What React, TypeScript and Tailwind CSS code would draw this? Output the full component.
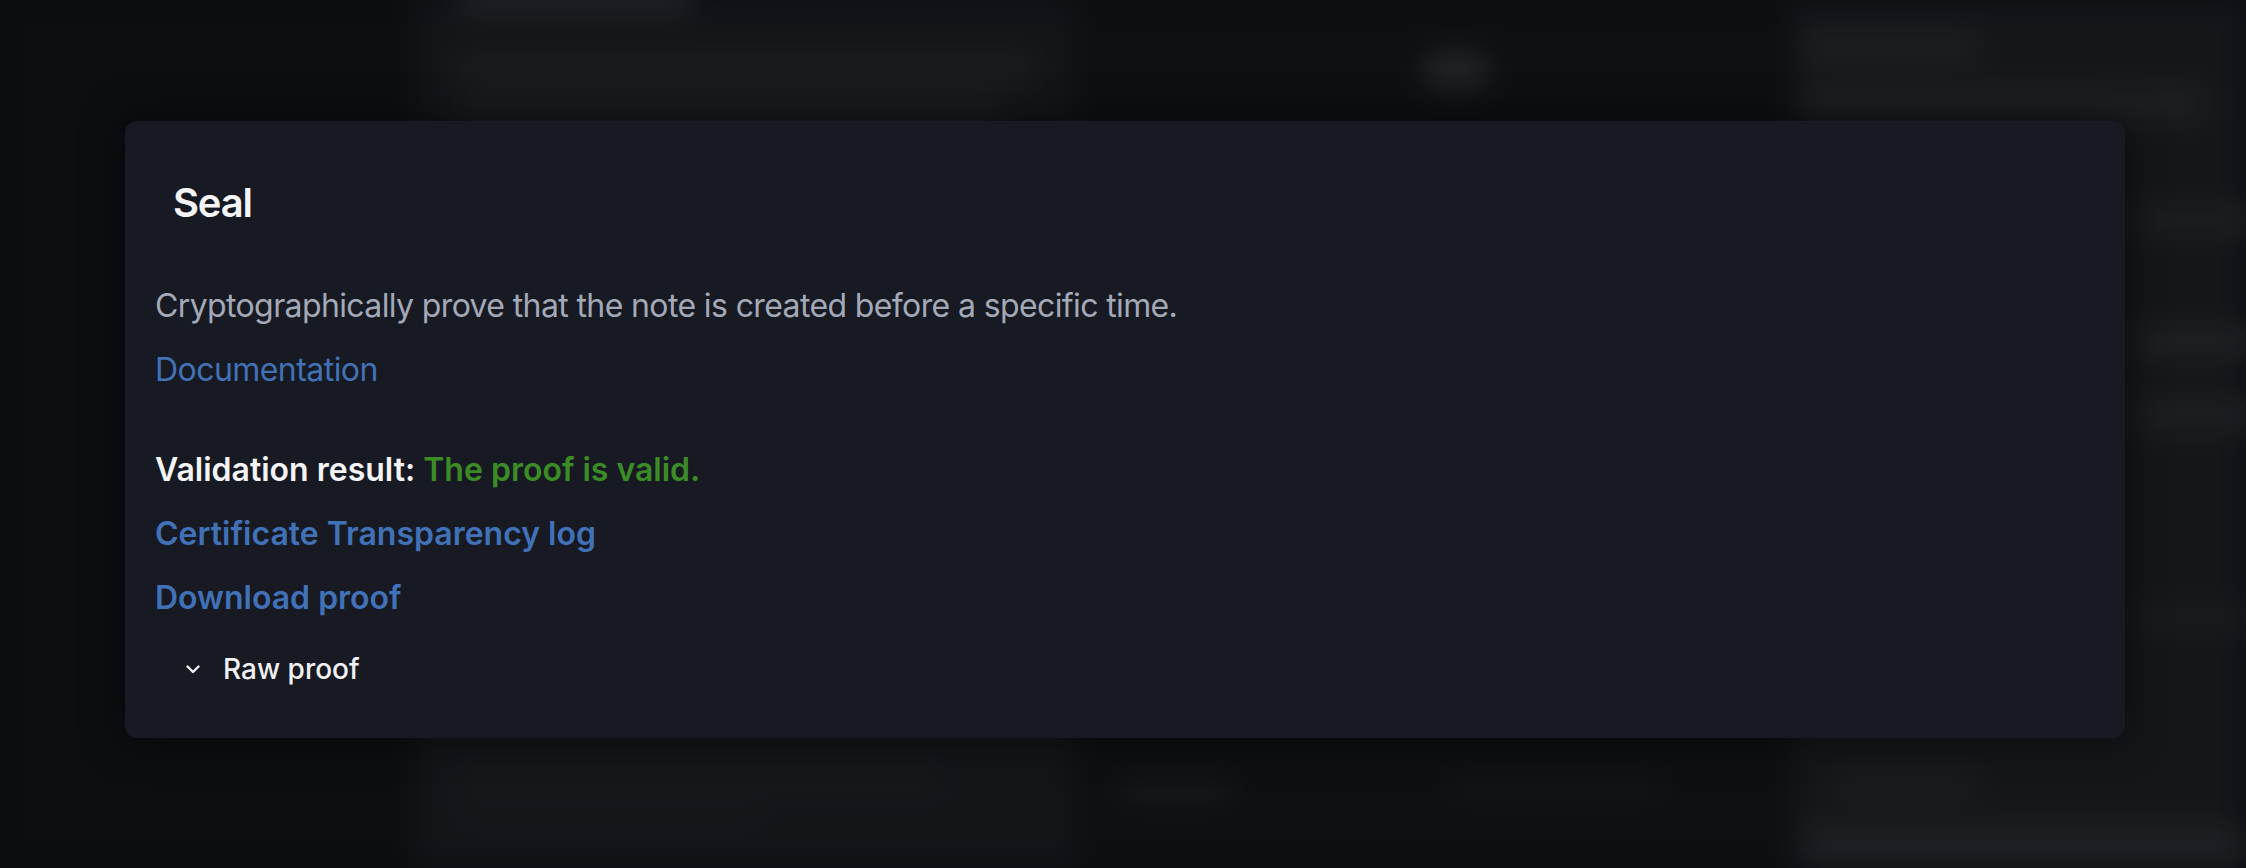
import React, { useState } from "react";

const font = "font-['Inter','Noto_Sans',sans-serif]";

// Blurred page that sits behind the dialog
function BackgroundPage() {
  return (
    <div className="flex h-[868px] w-full blur-[14px]">
      {/* Sidebar */}
      <aside className="h-full w-[415px] shrink-0 bg-[#0e1014]" />

      {/* Note column */}
      <section className="flex h-full w-[660px] shrink-0 flex-col bg-[#16181c] px-[45px]">
        <div className="mt-[-14px] h-[26px] w-[230px] rounded bg-[#26282d]" />
        <div className="mt-[44px] flex flex-col gap-[18px]">
          <div className="h-[24px] w-[570px] rounded bg-[#202226]" />
          <div className="h-[24px] w-[540px] rounded bg-[#1f2125]" />
        </div>
        <div className="mt-auto mb-[46px] flex flex-col gap-[14px]">
          <div className="h-[20px] w-[480px] rounded bg-[#1a1d22]" />
          <div className="h-[18px] w-[300px] rounded bg-[#181b20]" />
        </div>
      </section>

      {/* Middle column */}
      <section className="flex h-full flex-1 flex-col bg-[#0f1115] px-[43px]">
        <div className="mt-[50px] ml-[303px] h-[40px] w-[70px] rounded-full bg-[#26272b]" />
        <div className="mt-auto mb-[66px] flex gap-[215px]">
          <div className="h-[22px] w-[115px] rounded bg-[#1b1d21]" />
          <div className="h-[16px] w-[215px] rounded bg-[#1a1c20]" />
        </div>
      </section>

      {/* Right column */}
      <section className="flex h-full w-[456px] shrink-0 flex-col bg-[#17191d] pl-[15px]">
        <div className="mt-[36px] h-[22px] w-[172px] rounded bg-[#24262a]" />
        <div className="mt-[28px] h-[34px] w-[400px] rounded bg-[#222428]" />
        <div className="mt-[86px] ml-[330px] flex flex-col">
          <div className="h-[28px] w-[120px] rounded bg-[#222327]" />
          <div className="mt-[94px] h-[28px] w-[120px] rounded bg-[#25262a]" />
          <div className="mt-[42px] h-[34px] w-[120px] rounded bg-[#222327]" />
          <div className="mt-[172px] h-[28px] w-[120px] rounded bg-[#1c1e22]" />
        </div>
        <div className="mt-auto ml-[28px] h-[22px] w-[145px] rounded bg-[#1f2125]" />
        <div className="mt-[28px] h-[44px] w-[440px] rounded-t bg-[#222428]" />
      </section>
    </div>
  );
}

function ChevronDown() {
  return (
    <svg width="14" height="9" viewBox="0 0 14 9" fill="none" className="shrink-0">
      <path d="M1.5 1.5 7 7l5.5-5.5" stroke="#f1f1f3" strokeWidth="2.4" strokeLinecap="round" strokeLinejoin="round" />
    </svg>
  );
}

function SealDialog() {
  const [open, setOpen] = useState(false);

  return (
    <div className="w-[2000px] rounded-[12px] bg-[#181a23] px-[30px] pt-[58px] pb-[49px] shadow-[0_0_40px_rgba(0,0,0,0.55)]">
      <h2 className="pl-[18px] text-[40px] leading-[48px] font-semibold tracking-[-1.2px] text-[#f4f4f6]">Seal</h2>

      <p className="mt-[55px] text-[32px] leading-[48px] tracking-[-0.62px] text-[#a3a9b7]">
        Cryptographically prove that the note is created before a specific time.
      </p>
      <a href="#" className="mt-[16px] block w-fit text-[32px] leading-[48px] tracking-[-0.55px] text-[#4171b7]">
        Documentation
      </a>

      <p className="mt-[52px] text-[32px] leading-[48px] font-semibold text-[#f4f4f6]">
        Validation result: <span className="text-[#3b8c26]">The proof is valid.</span>
      </p>
      <a href="#" className="mt-[16px] block w-fit text-[32px] leading-[48px] font-semibold text-[#4171b7]">
        Certificate Transparency log
      </a>
      <a href="#" className="mt-[16px] block w-fit text-[32px] leading-[48px] font-semibold text-[#4171b7]">
        Download proof
      </a>

      <button
        type="button"
        onClick={() => setOpen(!open)}
        className="mt-[27px] flex items-center gap-[23px] pl-[31px] text-[28px] leading-[40px] font-medium text-[#f1f1f3]"
      >
        <ChevronDown />
        Raw proof
      </button>
    </div>
  );
}

export default function App() {
  return (
    <div className={`relative h-[868px] w-[2246px] overflow-hidden bg-[#0e1014] ${font} antialiased`}>
      <BackgroundPage />

      {/* Dialog overlay */}
      <div className="absolute inset-0 flex items-start justify-start bg-black/10 pt-[121px] pl-[125px]">
        <SealDialog />
      </div>
    </div>
  );
}
